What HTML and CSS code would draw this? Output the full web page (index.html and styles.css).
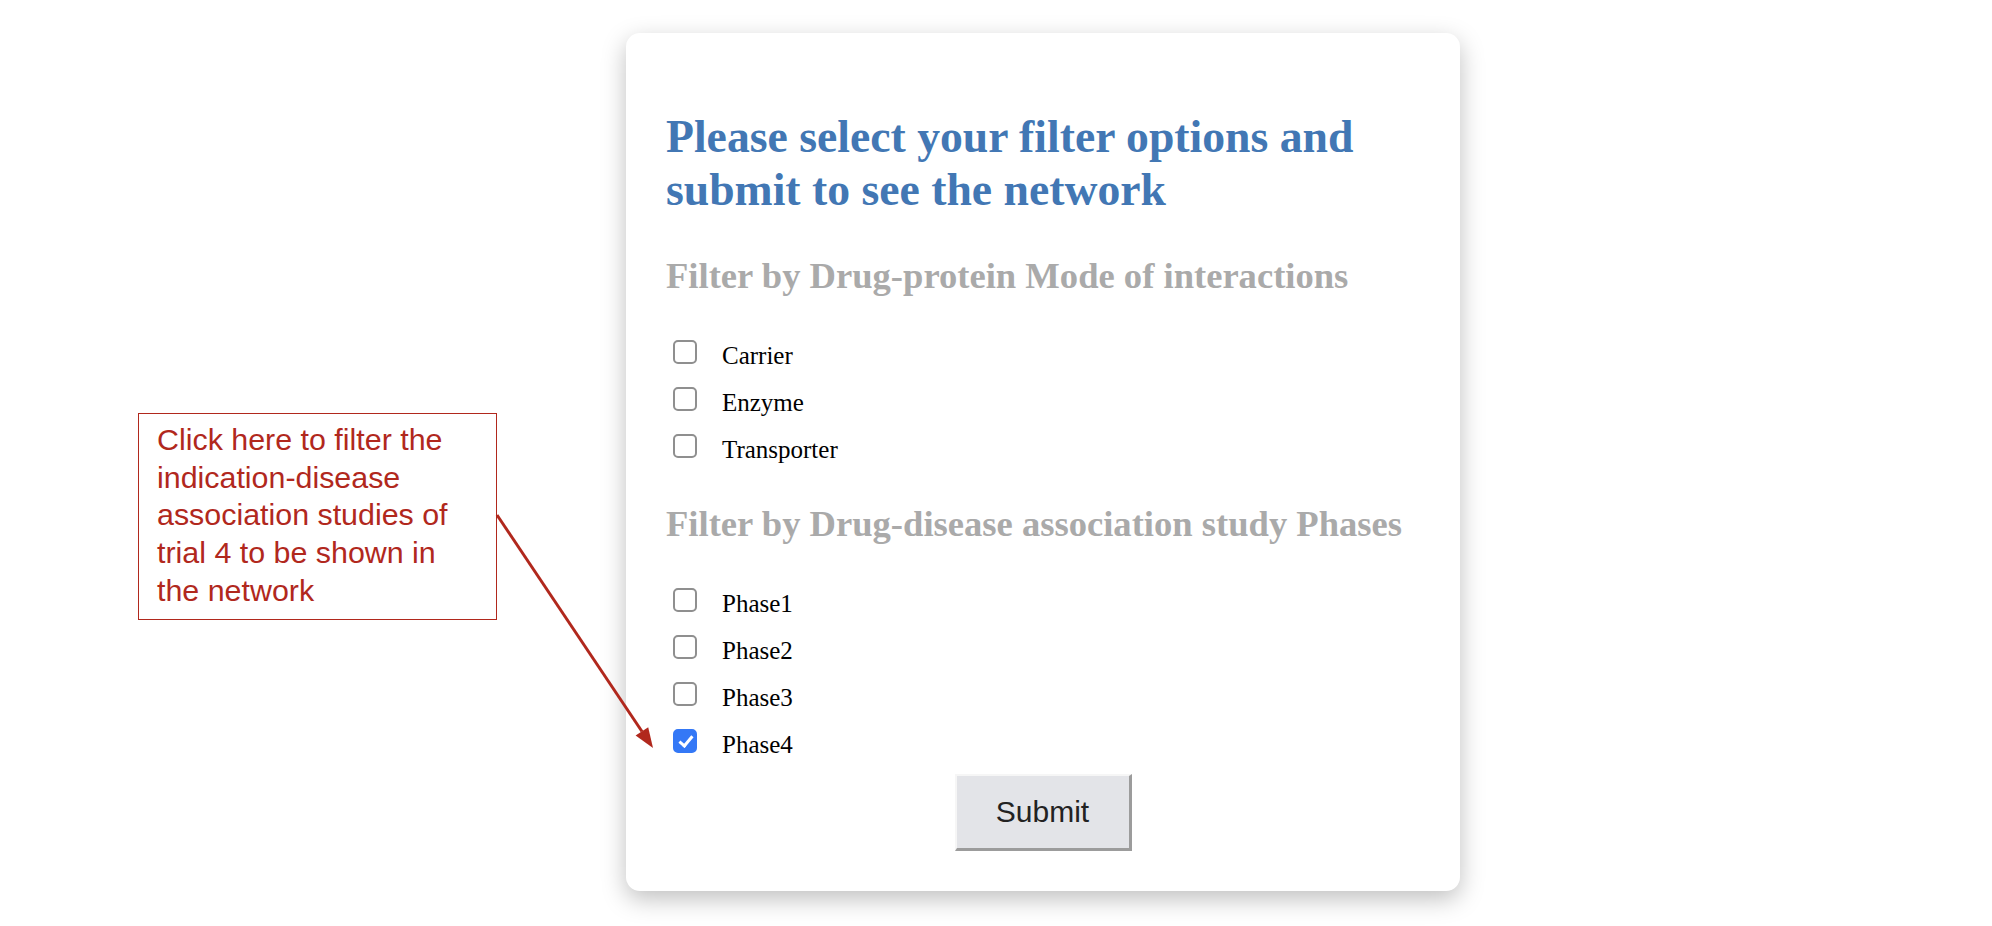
FILE: index.html
```html
<!DOCTYPE html>
<html lang="en">
<head>
<meta charset="utf-8">
<title>Filter options</title>
<link rel="stylesheet" href="styles.css">
</head>
<body>
<div class="page">
  <form class="card">
    <h1 class="title">Please select your filter options and submit to see the network</h1>

    <h2 class="subtitle">Filter by Drug-protein Mode of interactions</h2>
    <div class="options">
      <label class="option"><input type="checkbox" class="box"><span>Carrier</span></label>
      <label class="option"><input type="checkbox" class="box"><span>Enzyme</span></label>
      <label class="option"><input type="checkbox" class="box"><span>Transporter</span></label>
    </div>

    <h2 class="subtitle">Filter by Drug-disease association study Phases</h2>
    <div class="options options-last">
      <label class="option"><input type="checkbox" class="box"><span>Phase1</span></label>
      <label class="option"><input type="checkbox" class="box"><span>Phase2</span></label>
      <label class="option"><input type="checkbox" class="box"><span>Phase3</span></label>
      <label class="option"><input type="checkbox" class="box" checked><span>Phase4</span></label>
    </div>

    <div class="actions">
      <button type="button" class="submit">Submit</button>
    </div>
  </form>

  <div class="callout">Click here to filter the<br>indication-disease<br>association studies of<br>trial 4 to be shown in<br>the network</div>

  <svg class="arrow" width="1992" height="926" viewBox="0 0 1992 926" aria-hidden="true">
    <line x1="497" y1="515" x2="642" y2="731.5" stroke="#b1281d" stroke-width="3"/>
    <polygon points="653,748 635.6,735.6 648.2,727.2" fill="#b1281d"/>
  </svg>
</div>
</body>
</html>
```

FILE: styles.css
```css
html, body {
  margin: 0;
  padding: 0;
  background: #ffffff;
}

.page {
  position: relative;
  width: 1992px;
  height: 926px;
  overflow: hidden;
  padding-top: 33px;
  box-sizing: border-box;
}

.card {
  margin-left: 626px;
  width: 834px;
  height: 858px;
  box-sizing: border-box;
  padding: 77px 40px 39px;
  background: #ffffff;
  border-radius: 14px;
  box-shadow: 0 8px 24px rgba(0, 0, 0, 0.25);
  font-family: "Liberation Serif", "Times New Roman", serif;
}

.title {
  margin: 0 0 39px;
  font-size: 45.7px;
  line-height: 53px;
  font-weight: bold;
  color: #4277b4;
}

.subtitle {
  margin: 0 0 36px;
  font-size: 36.6px;
  line-height: 41px;
  font-weight: bold;
  color: #aaaaaa;
  white-space: nowrap;
}

.options {
  display: flex;
  flex-direction: column;
  margin-bottom: 30px;
}

.options-last {
  margin-bottom: 6px;
}

.option {
  display: flex;
  align-items: flex-start;
  height: 47px;
  font-size: 25px;
  line-height: 47px;
  color: #000000;
}

.box {
  -webkit-appearance: none;
  appearance: none;
  position: relative;
  flex: 0 0 auto;
  width: 24px;
  height: 24px;
  margin: 8px 25px 0 7px;
  box-sizing: border-box;
  border: 2px solid #8f8f8f;
  border-radius: 5px;
  background: #ffffff;
}

.box:checked {
  background: #3478f6;
  border-color: #3478f6;
}

.box:checked::after {
  content: "";
  position: absolute;
  left: 6.5px;
  top: 2px;
  width: 5px;
  height: 11px;
  border-right: 3px solid #ffffff;
  border-bottom: 3px solid #ffffff;
  transform: rotate(40deg);
}

.actions {
  display: flex;
  justify-content: center;
}

.submit {
  width: 177px;
  height: 77px;
  box-sizing: border-box;
  background: #e3e4e8;
  border-style: solid;
  border-width: 2px 3px 3px 2px;
  border-color: #f6f6f6 #9c9c9c #9c9c9c #f6f6f6;
  font-family: "Liberation Sans", Arial, sans-serif;
  font-size: 30px;
  color: #222222;
  padding: 0;
}

.callout {
  position: absolute;
  left: 138px;
  top: 413px;
  width: 359px;
  height: 207px;
  box-sizing: border-box;
  border: 1.5px solid #b1281d;
  padding: 7px 0 0 18px;
  font-family: "Liberation Sans", Arial, sans-serif;
  font-size: 30.4px;
  line-height: 37.7px;
  color: #b1281d;
  white-space: nowrap;
  background: #ffffff;
}

.arrow {
  position: absolute;
  left: 0;
  top: 0;
  pointer-events: none;
}
```
